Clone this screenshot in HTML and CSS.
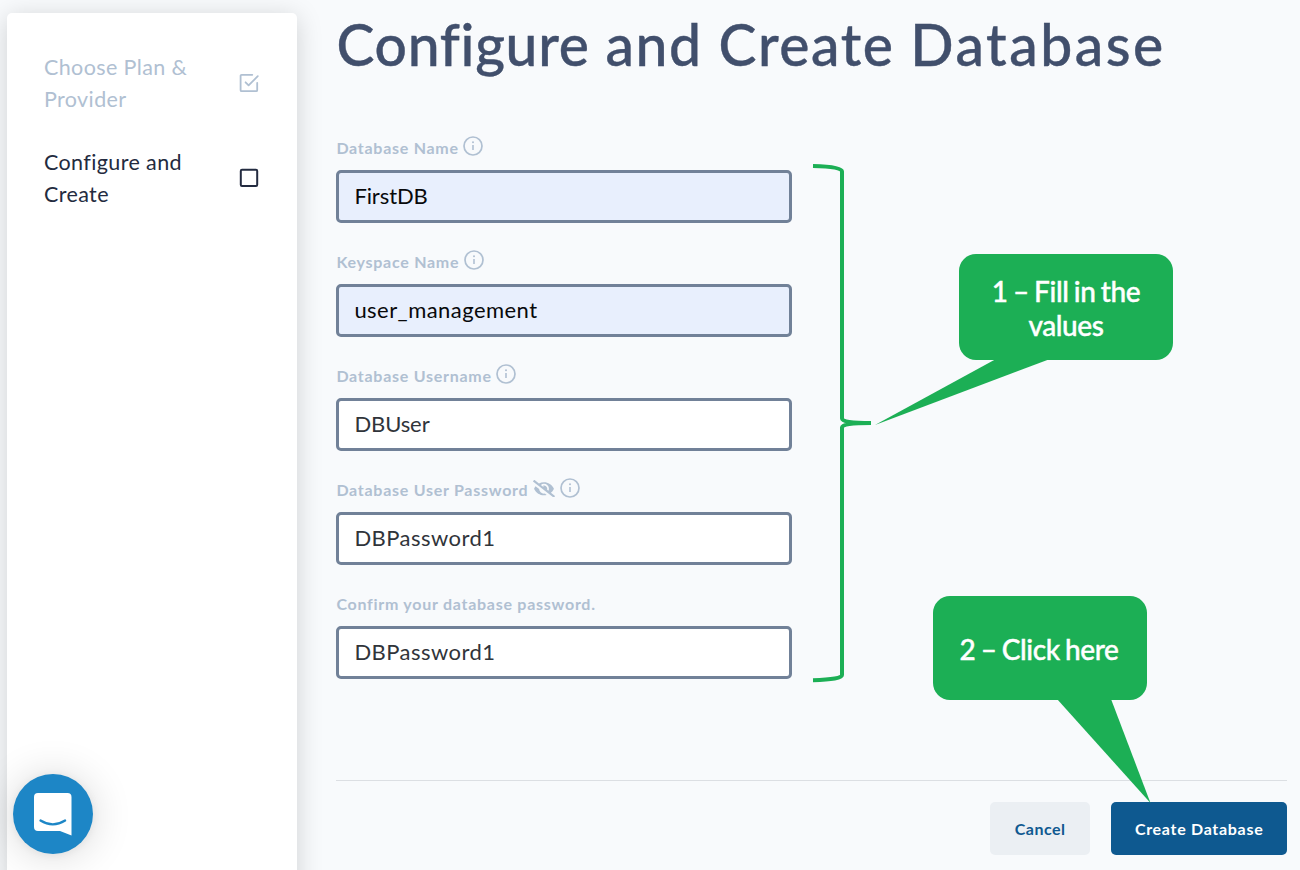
FILE: index.html
```html
<!DOCTYPE html>
<html lang="en">
<head>
<meta charset="utf-8">
<title>Configure and Create Database</title>
<link rel="stylesheet" href="styles.css">
</head>
<body>
<svg class="defs" aria-hidden="true">
  <symbol id="info" viewBox="0 0 20 20">
    <circle cx="10" cy="10" r="9" fill="none" stroke="currentColor" stroke-width="1.7"/>
    <circle cx="10" cy="6.3" r="1" fill="currentColor"/>
    <path d="M10 9v5" fill="none" stroke="currentColor" stroke-width="1.6"/>
  </symbol>
</svg>
<div class="page">
  <aside class="sidebar">
    <ol class="steps">
      <li class="step step-done">
        <span class="step-name">Choose Plan &amp;<br>Provider</span>
        <svg class="step-icon" viewBox="0 0 20 20" fill="none" stroke="currentColor" stroke-width="1.8" stroke-linecap="round" stroke-linejoin="round"><path d="M13.3 1.8H2.6a1 1 0 0 0-1 1v14.4a1 1 0 0 0 1 1h14.6a1 1 0 0 0 1-1V9.8"/><path d="M6.6 9.3l3 3L18.8 3.1"/></svg>
      </li>
      <li class="step step-current">
        <span class="step-name">Configure and<br>Create</span>
        <svg class="step-icon" viewBox="0 0 20 20" fill="none" stroke="currentColor" stroke-width="2"><rect x="1.8" y="1.8" width="16.4" height="16.2" rx="1.2"/></svg>
      </li>
    </ol>
  </aside>
  <main class="main">
    <h1 class="title"><span class="title-lead">Configure</span> and Create <span class="title-end">Database</span></h1>
    <form class="form">
      <div class="field">
        <div class="label"><span>Database Name</span><svg class="info"><use href="#info"/></svg></div>
        <div class="input filled tight">FirstDB</div>
      </div>
      <div class="field">
        <div class="label"><span>Keyspace Name</span><svg class="info"><use href="#info"/></svg></div>
        <div class="input filled">user_management</div>
      </div>
      <div class="field">
        <div class="label"><span>Database Username</span><svg class="info"><use href="#info"/></svg></div>
        <div class="input tight">DBUser</div>
      </div>
      <div class="field">
        <div class="label"><span>Database User Password</span><svg class="eye" viewBox="0 0 640 512"><path fill="currentColor" d="M320 400c-75.85 0-137.25-58.71-142.9-133.11L72.2 185.82c-13.79 17.3-26.48 35.59-36.72 55.59a32.35 32.35 0 0 0 0 29.19C89.71 376.41 197.07 448 320 448c26.91 0 52.87-4 77.89-10.46L346 397.39a144.13 144.13 0 0 1-26 2.61zm313.82 58.1l-110.55-85.44a331.25 331.25 0 0 0 81.25-102.07 32.35 32.35 0 0 0 0-29.19C550.29 135.59 442.93 64 320 64a308.15 308.15 0 0 0-147.32 37.7L45.46 3.37A16 16 0 0 0 23 6.18L3.37 31.45A16 16 0 0 0 6.18 53.9l588.36 454.73a16 16 0 0 0 22.46-2.81l19.64-25.27a16 16 0 0 0-2.82-22.45zm-183.72-142l-39.3-30.38A94.75 94.75 0 0 0 416 256a94.76 94.76 0 0 0-121.31-92.21A47.65 47.65 0 0 1 304 192a46.64 46.64 0 0 1-1.54 10l-73.61-56.89A142.31 142.31 0 0 1 320 112a143.92 143.92 0 0 1 144 144c0 21.63-5.29 41.79-13.9 60.11z"/></svg><svg class="info"><use href="#info"/></svg></div>
        <div class="input">DBPassword1</div>
      </div>
      <div class="field">
        <div class="label"><span>Confirm your database password.</span></div>
        <div class="input">DBPassword1</div>
      </div>
    </form>
    <footer class="actions">
      <button class="btn btn-cancel">Cancel</button>
      <button class="btn btn-create">Create Database</button>
    </footer>
  </main>
</div>
<svg class="annotations" viewBox="0 0 1300 870">
  <path class="brace" d="M813 166Q842 166.5 842 171.5V418.5Q842 423 871 423Q842 423 842 427.5V675Q842 679.5 813 680.2"/>
  <path class="pointer" d="M996 359L875 425L1050 359Z"/>
  <path class="pointer" d="M1057 699L1150.5 803L1111 699Z"/>
</svg>
<div class="callout callout-fill"><span>1 – Fill in the<br>values</span></div>
<div class="callout callout-click"><span>2 – Click here</span></div>
<div class="chat">
  <svg class="chat-icon" viewBox="0 0 38 44"><path fill="#fff" d="M4 0h29.5a4 4 0 0 1 4 4v38.500L26 38H4a4 4 0 0 1-4-4V4a4 4 0 0 1 4-4z"/><path d="M6.5 27.5q12.3 7.8 24.6 0" fill="none" stroke="#1d86c6" stroke-width="2.3" stroke-linecap="round"/></svg>
</div>
</body>
</html>
```
FILE: styles.css
```css
* { box-sizing: border-box; }
body {
  margin: 0;
  width: 1300px;
  height: 870px;
  overflow: hidden;
  position: relative;
  background: #f8fafc;
  font-family: Lato, "Open Sans", sans-serif;
}
.defs { position: absolute; width: 0; height: 0; }
.page { display: flex; height: 870px; }
.sidebar {
  flex: none;
  width: 290px;
  height: 900px;
  margin: 13px 0 0 6.5px;
  padding: 37.5px 37.5px 0 37.5px;
  background: #fff;
  border-radius: 5px;
  box-shadow: 0 4px 26px rgba(0, 0, 0, .17);
}
.steps {
  display: flex;
  flex-direction: column;
  gap: 31.5px;
  margin: 0;
  padding: 0;
  list-style: none;
}
.step { display: flex; justify-content: space-between; align-items: center; }
.step-name { font-size: 21.5px; line-height: 32px; letter-spacing: .38px; white-space: nowrap; }
.step-icon { width: 20px; height: 20px; }
.step-done { color: #b0c0d2; }
.step-current { color: #232b40; }
.main {
  flex: none;
  width: 951px;
  margin-left: 39.9px;
}
.title {
  margin: 0;
  height: 132px;
  color: #414f6c;
  font-size: 57px;
  line-height: 89px;
  font-weight: 500;
  letter-spacing: 1.55px;
  -webkit-text-stroke: .4px #414f6c;
  white-space: nowrap;
}
.title-lead { letter-spacing: .7px; }
.title-end { letter-spacing: 2.5px; }
.form { display: flex; flex-direction: column; gap: 23px; width: 456px; }
.label {
  display: flex;
  align-items: center;
  height: 32px;
  margin-bottom: 6px;
  color: #b0c0d2;
  font-size: 16px;
  font-weight: 700;
  letter-spacing: .73px;
}
.label span { padding-bottom: 1px; }
.info { width: 20px; height: 20px; margin: 0 0 4px 4.6px; }
.eye { width: 22px; height: 17.5px; margin: 0 0 3px 4.6px; }
.input {
  display: flex;
  align-items: center;
  height: 53px;
  padding: 0 15px 2px;
  border: 3px solid #718198;
  border-radius: 5px;
  background: #fff;
  color: #30343a;
  font-size: 22px;
  letter-spacing: .45px;
}
.filled { background: #e8effd; color: #08090b; }
.tight { letter-spacing: -.1px; }
.actions {
  display: flex;
  justify-content: flex-end;
  gap: 21px;
  margin-top: 101px;
  padding-top: 21px;
  border-top: 1px solid #dcdfe3;
}
.btn {
  height: 53px;
  padding: 0 0 1px;
  border: 0;
  border-radius: 5px;
  font: 700 16px Lato, sans-serif;
  letter-spacing: .7px;
}
.btn-cancel { width: 99.5px; background: #ebeff3; color: #0f5990; letter-spacing: .5px; }
.btn-create { width: 176.5px; background: #0e5990; color: #fff; }
.annotations { position: absolute; left: 0; top: 0; width: 1300px; height: 870px; pointer-events: none; }
.brace { fill: none; stroke: #1caf55; stroke-width: 4; }
.pointer { fill: #1caf55; }
.callout {
  position: absolute;
  display: flex;
  align-items: center;
  justify-content: center;
  width: 214px;
  border-radius: 17px;
  background: #1caf55;
  color: #fff;
  font-family: Lato, sans-serif;
  font-size: 28px;
  font-weight: 500;
  line-height: 34px;
  letter-spacing: -.4px;
  word-spacing: -1.4px;
  -webkit-text-stroke: .4px #fff;
  text-align: center;
  white-space: nowrap;
}
.callout-fill { left: 959px; top: 254px; height: 106px; padding-top: 1px; }
.callout-click { left: 933px; top: 596px; height: 104px; padding-top: 1px; padding-right: 2px; }
.chat {
  position: absolute;
  left: 13px;
  top: 774px;
  width: 80px;
  height: 80px;
  padding: 19px 0 0 21px;
  border-radius: 50%;
  background: #1d86c6;
  box-shadow: 0 2px 42px rgba(0, 0, 0, .16), 0 1px 8px rgba(0, 0, 0, .06);
}
.chat-icon { display: block; width: 38px; height: 44px; }
```
